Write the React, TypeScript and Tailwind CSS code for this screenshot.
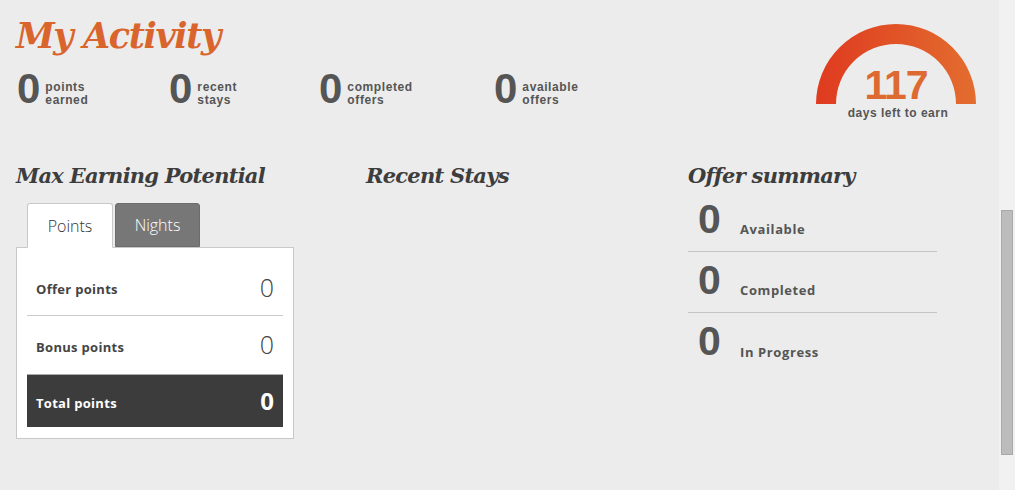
import { useState } from 'react';

const serif = { fontFamily: '"DejaVu Serif", Georgia, serif' };

const stats = [
  { value: 0, top: 'points', bottom: 'earned', w: 'w-[152px]' },
  { value: 0, top: 'recent', bottom: 'stays', w: 'w-[150px]' },
  { value: 0, top: 'completed', bottom: 'offers', w: 'w-[175px]' },
  { value: 0, top: 'available', bottom: 'offers', w: 'w-[150px]' },
];

const offers = [
  { value: 0, label: 'Available' },
  { value: 0, label: 'Completed' },
  { value: 0, label: 'In Progress' },
];

function Gauge({ days }: { days: number }) {
  return (
    <div className="relative w-[162px] h-[120px]">
      <svg width="162" height="84" viewBox="0 0 162 84" className="absolute left-0 top-[22px]">
        <defs>
          <linearGradient id="arc" x1="0" y1="0" x2="1" y2="0">
            <stop offset="0" stopColor="#df3a1f" />
            <stop offset="1" stopColor="#e36d2f" />
          </linearGradient>
        </defs>
        <path d="M1 82 A80 80 0 0 1 161 82 L141 82 A60 60 0 0 0 21 82 Z" fill="url(#arc)" />
      </svg>
      <div className="absolute inset-x-0 top-[63px] text-center font-bold text-[41px] leading-[44px] text-[#dd6a30] tracking-[-1px]">
        {days}
      </div>
      <div className="absolute inset-x-0 top-[105px] pl-[4px] text-center font-bold text-[12px] leading-[16px] text-[#555] tracking-[0.5px]">
        days left to earn
      </div>
    </div>
  );
}

export default function App() {
  const [tab, setTab] = useState<'points' | 'nights'>('points');

  return (
    <div className="flex w-[1015px] h-[490px] bg-[#ececec] overflow-hidden" style={{ fontFamily: '"Liberation Sans", Arial, sans-serif' }}>
      <div className="flex-1 flex flex-col">
        {/* header: title, counters, gauge */}
        <div className="flex justify-between pl-4 pr-[22px]">
          <div>
            <h1 className="pt-[14px] text-[35px] leading-[44px] font-bold italic text-[#d9652c] tracking-[-1.4px]" style={serif}>
              My Activity
            </h1>
            <div className="flex mt-[14px]">
              {stats.map((s, i) => (
                <div key={i} className={`flex items-end ${s.w}`}>
                  <span className="font-bold text-[42px] leading-[34px] text-[#555] tracking-[-2px] pl-[1px]">{s.value}</span>
                  <span className="ml-[7px] mb-[-1px] font-bold text-[12px] leading-[13px] text-[#555] tracking-[0.6px]">
                    {s.top}
                    <br />
                    {s.bottom}
                  </span>
                </div>
              ))}
            </div>
          </div>
          <Gauge days={117} />
        </div>

        {/* sections */}
        <div className="grid grid-cols-[350px_322px_1fr] px-4 mt-[42px]">
          <div>
            <h2 className="pt-[1px] text-[21px] leading-[26px] font-bold italic text-[#3d3d3d] tracking-[-0.75px]" style={serif}>
              Max Earning Potential
            </h2>
            <div className="w-[278px] mt-[14px]" style={{ fontFamily: '"Open Sans", sans-serif' }}>
              <div className="flex gap-[2px] pl-[11px] relative z-10">
                <button
                  type="button"
                  onClick={() => setTab('points')}
                  className={`w-[86px] h-[45px] rounded-t-[3px] border border-[#c8c8c8] text-[16px] font-light ${
                    tab === 'points' ? 'bg-white text-[#333] border-b-white' : 'bg-[#777] text-white border-[#666]'
                  }`}
                >
                  Points
                </button>
                <button
                  type="button"
                  onClick={() => setTab('nights')}
                  className={`w-[85px] h-[44px] rounded-t-[3px] border text-[16px] font-light ${
                    tab === 'nights' ? 'bg-white text-[#333] border-[#c8c8c8] border-b-white' : 'bg-[#777] text-white border-[#6c6c6c]'
                  }`}
                >
                  Nights
                </button>
              </div>
              <div className="bg-white border border-[#c8c8c8] -mt-px px-[10px] pt-[12px] pb-[11px]">
                <div className="flex items-center justify-between h-[56px] border-b border-[#ccc] pl-[9px] pr-[9px]">
                  <span className="text-[13px] font-bold text-[#444] tracking-[0.3px] pt-[5px]">Offer points</span>
                  <span className="text-[25px] font-light text-[#444]">0</span>
                </div>
                <div className="flex items-center justify-between h-[58px] pl-[9px] pr-[9px]">
                  <span className="text-[13px] font-bold text-[#444] tracking-[0.3px] pt-[6px]">Bonus points</span>
                  <span className="text-[25px] font-light text-[#444]">0</span>
                </div>
                <div className="flex items-center justify-between h-[53px] bg-[#3c3c3c] border-t border-[#aaa] pl-[9px] pr-[9px]">
                  <span className="text-[13px] font-bold text-white tracking-[0.3px] pt-[6px]">Total points</span>
                  <span className="text-[24px] font-bold text-white">0</span>
                </div>
              </div>
            </div>
          </div>

          <div>
            <h2 className="pt-[1px] text-[21px] leading-[26px] font-bold italic text-[#3d3d3d] tracking-[-0.75px]" style={serif}>
              Recent Stays
            </h2>
          </div>

          <div>
            <h2 className="pt-[1px] text-[21px] leading-[26px] font-bold italic text-[#3d3d3d] tracking-[-0.75px]" style={serif}>
              Offer summary
            </h2>
            <div className="w-[249px] mt-[2px]">
              {offers.map((o, i) => (
                <div key={o.label} className={`flex items-end h-[61px] pb-[12px] ${i < 2 ? 'border-b border-[#c4c4c4]' : ''}`}>
                  <span className="w-[52px] pl-[10px] font-bold text-[41px] leading-[38px] text-[#555] tracking-[-2px] self-start mt-[9px]">{o.value}</span>
                  <span
                    className="text-[13px] font-bold text-[#555] tracking-[0.6px]"
                    style={{ fontFamily: '"Open Sans", sans-serif' }}
                  >
                    {o.label}
                  </span>
                </div>
              ))}
            </div>
          </div>
        </div>
      </div>

      {/* scrollbar */}
      <div className="w-[16px] bg-[#f1f1f1] pt-[210px] pb-[35px] pl-[2px] pr-[2px]">
        <div className="h-full bg-[#bcbcbc] border border-[#a9a9a9]" />
      </div>
    </div>
  );
}
